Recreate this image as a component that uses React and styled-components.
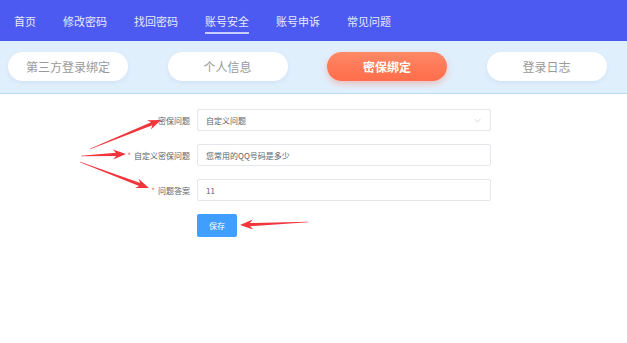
import React from 'react'
import styled, { createGlobalStyle } from 'styled-components'

const GlobalStyle = createGlobalStyle`
  body {
    margin: 0;
    background: #fff;
    font-family: "Noto Sans CJK SC", "Noto Sans", sans-serif;
  }
`

const navItems = ['首页', '修改密码', '找回密码', '账号安全', '账号申诉', '常见问题']
const tabs = ['第三方登录绑定', '个人信息', '密保绑定', '登录日志']

// tapered arrow shape from tail (x1,y1) to tip (x2,y2)
const arrowPoints = (x1, y1, x2, y2) => {
  const dx = x2 - x1
  const dy = y2 - y1
  const len = Math.hypot(dx, dy)
  const ux = dx / len
  const uy = dy / len
  const nx = -uy
  const ny = ux
  const headLen = 13
  const headW = 5
  const neckW = 1.6
  const bx = x2 - ux * headLen
  const by = y2 - uy * headLen
  const nbx = x2 - ux * (headLen - 3)
  const nby = y2 - uy * (headLen - 3)
  const pts = [
    [x1 + nx * 0.3, y1 + ny * 0.3],
    [nbx + nx * neckW, nby + ny * neckW],
    [bx + nx * headW, by + ny * headW],
    [x2, y2],
    [bx - nx * headW, by - ny * headW],
    [nbx - nx * neckW, nby - ny * neckW],
    [x1 - nx * 0.3, y1 - ny * 0.3],
  ]
  return pts.map((p) => p.map((v) => v.toFixed(1)).join(',')).join(' ')
}

const arrows = [
  [90, 149, 161, 120],
  [81, 156, 126, 154],
  [80, 162, 149, 188],
  [308, 222, 240, 225],
]

export default function App() {
  return (
    <Page>
      <GlobalStyle />
      <Nav>
        {navItems.map((n) => (
          <NavItem key={n} active={n === '账号安全'}>{n}</NavItem>
        ))}
      </Nav>
      <TabBand>
        {tabs.map((t) => (
          <Tab key={t} active={t === '密保绑定'}>{t}</Tab>
        ))}
      </TabBand>
      <Form>
        <Label>密保问题</Label>
        <Field>
          <span>自定义问题</span>
          <Chevron viewBox="0 0 10 6">
            <path d="M1 1l4 4 4-4" fill="none" stroke="#c0c4cc" strokeWidth="1" />
          </Chevron>
        </Field>
        <Label><Star>*</Star>自定义密保问题</Label>
        <Field><span>您常用的QQ号码是多少</span></Field>
        <Label><Star>*</Star>问题答案</Label>
        <Field><span>11</span></Field>
        <span />
        <SaveButton>保存</SaveButton>
      </Form>
      <Arrows viewBox="0 0 627 343">
        {arrows.map((a, i) => (
          <polygon key={i} points={arrowPoints(...a)} fill="#f0353b" />
        ))}
      </Arrows>
    </Page>
  )
}

const Page = styled.div`
  position: relative;
  width: 627px;
  height: 343px;
  overflow: hidden;
`

const Nav = styled.nav`
  height: 41px;
  background: #4c5af2;
  display: flex;
  align-items: center;
  padding-left: 14px;
  gap: 27px;
`

const NavItem = styled.a`
  color: #e8eaff;
  font-size: 11px;
  line-height: 14px;
  padding-top: 1px;
  position: relative;
  &::after {
    content: '';
    display: ${(p) => (p.active ? 'block' : 'none')};
    position: absolute;
    left: 0;
    right: 0;
    bottom: -6px;
    height: 2px;
    background: #c9cdfb;
  }
`

const TabBand = styled.div`
  height: 53px;
  background: #e0effc;
  border-bottom: 1px solid #b5dcf6;
  display: flex;
  align-items: center;
  gap: 39.5px;
  padding: 0 0 1px 8px;
  box-sizing: border-box;
`

const Tab = styled.div`
  flex: none;
  width: 120px;
  height: 29px;
  border-radius: 15px;
  display: flex;
  align-items: center;
  justify-content: center;
  font-size: 12px;
  color: ${(p) => (p.active ? '#fff' : '#999')};
  font-weight: ${(p) => (p.active ? 'bold' : 'normal')};
  background: ${(p) => (p.active ? 'linear-gradient(180deg, #ff8866 0%, #ff6d4a 100%)' : '#fff')};
  box-shadow: ${(p) => (p.active ? '0 3px 6px rgba(255, 110, 74, 0.35)' : '0 2px 4px rgba(120, 160, 200, 0.15)')};
`

const Form = styled.div`
  display: grid;
  grid-template-columns: 120px 294px;
  column-gap: 7px;
  row-gap: 13px;
  padding: 15px 0 0 70px;
  font-size: 8px;
`

const Label = styled.label`
  height: 22px;
  display: flex;
  align-items: center;
  justify-content: flex-end;
  color: #606266;
`

const Star = styled.span`
  color: #f56c6c;
  margin-right: 3px;
`

const Field = styled.div`
  height: 22px;
  box-sizing: border-box;
  border: 1px solid #e4e7ed;
  border-radius: 2px;
  display: flex;
  align-items: center;
  justify-content: space-between;
  padding: 0 9px 0 8px;
  color: #606266;
  font-size: 8px;
`

const Chevron = styled.svg`
  width: 7px;
  height: 5px;
`

const SaveButton = styled.button`
  width: 40px;
  height: 23px;
  background: #409eff;
  border: none;
  border-radius: 2px;
  color: #fff;
  font-family: inherit;
  font-size: 8px;
  padding: 0;
`

const Arrows = styled.svg`
  position: absolute;
  left: 0;
  top: 0;
  width: 627px;
  height: 343px;
  pointer-events: none;
`
